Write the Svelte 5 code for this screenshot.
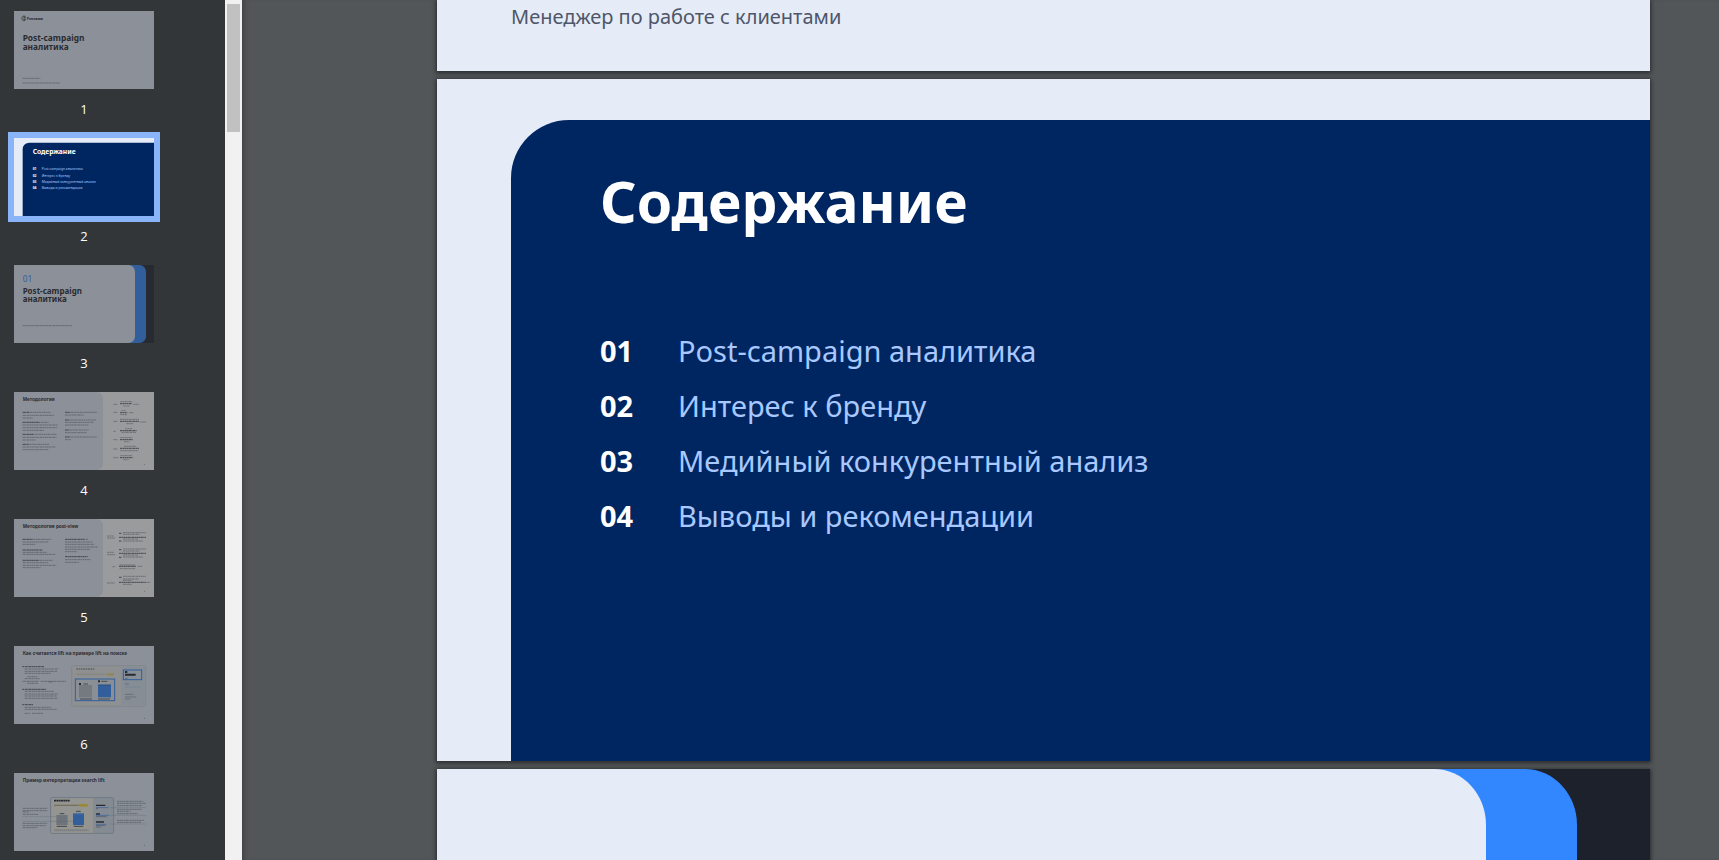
<script>
  const contents = [
    ['01', 'Post-campaign аналитика'],
    ['02', 'Интерес к бренду'],
    ['03', 'Медийный конкурентный анализ'],
    ['04', 'Выводы и рекомендации'],
  ];

  // Miniature slides live in a 420 x 234 space. Bars are [x, y, width, heavy?].
  const slides = [
    { n: 1, kind: 'cover', bars: [[26, 202, 53], [26, 216, 112]] },
    { n: 2, kind: 'contents', bars: [] },
    { n: 3, kind: 'section', bars: [[26, 182, 148]] },
    {
      n: 4, kind: 'method', title: 'Методология',
      bars: [
        [26, 61, 20, 1], [48, 61, 62], [26, 70, 94], [26, 78, 30],
        [26, 91, 52, 1], [80, 91, 24], [26, 99, 106], [26, 107, 104], [26, 115, 64],
        [26, 127, 34, 1], [62, 127, 66], [26, 136, 102], [26, 144, 40],
        [26, 157, 18, 1], [46, 157, 60], [26, 165, 98], [26, 173, 78],
        [153, 61, 16, 1], [171, 61, 79], [153, 69, 56],
        [153, 84, 14, 1], [169, 84, 77], [153, 91, 86], [153, 99, 70],
        [153, 114, 14, 1], [169, 114, 55], [153, 122, 66],
        [153, 135, 16, 1], [171, 135, 78], [153, 143, 18],
        [298, 37, 13], [319, 29, 36], [318, 35, 36, 1], [328, 42, 18], [358, 37, 17],
        [298, 61, 13], [322, 56, 14], [318, 62, 22, 1], [319, 68, 20], [346, 62, 13],
        [298, 88, 13], [318, 82, 57], [318, 88, 57, 1], [337, 95, 20], [379, 90, 17],
        [298, 118, 8], [334, 110, 20], [318, 116, 50, 1], [322, 121, 44],
        [298, 143, 13], [319, 137, 36], [318, 143, 38, 1], [330, 149, 16],
        [298, 171, 13], [330, 163, 36], [318, 169, 57, 1], [319, 176, 54],
        [298, 197, 15], [319, 191, 36], [318, 197, 38, 1], [328, 203, 16], [390, 217, 3],
      ],
    },
    {
      n: 5, kind: 'method', title: 'Методология post-view',
      bars: [
        [26, 61, 30, 1], [58, 61, 54], [26, 69, 78], [26, 76, 38],
        [26, 93, 60, 1], [26, 100, 72], [26, 106, 98],
        [26, 124, 50, 1], [78, 124, 38], [26, 131, 78], [26, 139, 101], [26, 146, 54],
        [153, 61, 60, 1], [215, 61, 8], [153, 69, 82], [153, 76, 88], [153, 84, 98], [153, 91, 76], [153, 98, 36],
        [153, 113, 68, 1], [153, 122, 78], [153, 130, 42],
        [279, 51, 21], [279, 57, 24], [315, 43, 7, 1], [327, 41, 69], [327, 46, 50], [315, 55, 81, 1], [327, 60, 45], [315, 66, 8, 1], [327, 66, 60],
        [279, 100, 21], [279, 107, 24], [315, 92, 7, 1], [327, 90, 69], [327, 96, 50], [315, 103, 81, 1], [327, 108, 45], [315, 115, 8, 1], [327, 114, 60],
        [295, 143, 9], [317, 138, 46], [315, 142, 52, 1], [317, 149, 46], [372, 142, 14],
        [279, 192, 23], [315, 175, 9, 1], [327, 172, 69], [327, 180, 48], [327, 184, 27], [315, 190, 81, 1], [398, 190, 11], [327, 196, 27], [390, 217, 3],
      ],
    },
    {
      n: 6, kind: 'lift', title: 'Как считается lift на примере lift на поиске',
      bars: [
        [25, 62, 5, 1], [32, 62, 58, 1], [32, 69, 101], [32, 76, 97], [32, 82, 79],
        [40, 92, 30], [32, 98, 45], [26, 106, 48], [80, 106, 76], [40, 112, 32], [104, 108, 12],
        [25, 130, 5, 1], [32, 130, 64, 1], [32, 136, 88], [32, 144, 100], [32, 150, 96], [32, 157, 98],
        [25, 176, 5, 1], [32, 176, 26, 1], [32, 184, 80], [32, 190, 96], [32, 202, 17], [54, 202, 34], [390, 217, 3],
      ],
    },
    {
      n: 7, kind: 'search', title: 'Пример интерпретации search lift',
      bars: [
        [26, 106, 74], [26, 113, 74], [26, 117, 18], [26, 124, 46],
        [26, 151, 74], [26, 158, 70], [26, 164, 44],
        [309, 85, 79], [309, 91, 87], [309, 98, 76],
        [309, 109, 74], [309, 115, 40], [309, 122, 62],
        [309, 142, 81], [309, 148, 72], [390, 217, 3],
      ],
    },
  ];
</script>

{#snippet slideArt(s)}
  <svg class="art" viewBox="0 0 420 234" aria-hidden="true">
    <rect width="420" height="234" fill={s.kind === 'section' ? '#1d212b' : s.kind === 'method' ? '#fff' : '#e5ecf8'} />
    {#if s.kind === 'cover'}
      <g fill="none" stroke="#1d212b" stroke-width="2">
        <path d="M34 16a7 7 0 1 0 0 12" /><path d="M30 15v14M30 19h6M30 25h6" />
      </g>
      <text x="38" y="27" font-size="11" font-weight="700">Реклама</text>
      <text x="26" y="91" font-size="25" font-weight="700">Post-campaign</text>
      <text x="26" y="116" font-size="25" font-weight="700">аналитика</text>
    {:else if s.kind === 'contents'}
      <path d="M26 234V34a20 20 0 0 1 20-20H420V234Z" fill="#002661" />
      <text class="white" x="56" y="49" font-size="20" font-weight="700">Содержание</text>
      {#each contents as [num, label], i}
        <text class="white" x="56" y={97 + i * 19} font-size="10" font-weight="700">{num}</text>
        <text class="sky" x="83" y={97 + i * 19} font-size="10">{label}</text>
      {/each}
    {:else if s.kind === 'section'}
      <path d="M0 0H376a20 20 0 0 1 20 20V214a20 20 0 0 1-20 20H0Z" fill="#3287ff" />
      <path d="M0 0H343a20 20 0 0 1 20 20V214a20 20 0 0 1-20 20H0Z" fill="#e5ecf8" />
      <text class="blue" x="26" y="51" font-size="25">01</text>
      <text x="26" y="86" font-size="24" font-weight="700">Post-campaign</text>
      <text x="26" y="111" font-size="24" font-weight="700">аналитика</text>
    {:else}
      {#if s.kind === 'method'}
        <path d="M0 0H247a20 20 0 0 1 20 20V214a20 20 0 0 1-20 20H0Z" fill="#e5ecf8" />
      {/if}
      <text x="26" y="27" font-size="14" font-weight="700">{s.title}</text>
    {/if}

    {#if s.kind === 'lift'}
      <rect x="173" y="59" width="222" height="122" rx="5" fill="#e9e9e8" stroke="#bdcbd9" stroke-width="2" />
      <rect x="322" y="61" width="71" height="118" fill="#dce4ef" />
      <path d="M187 69h54" stroke="#5a6272" stroke-width="4" stroke-dasharray="5 2" opacity=".65" />
      <path d="M187 85h90" stroke="#dcd8c0" stroke-width="4" /><path d="M279 85h21" stroke="#f0d98a" stroke-width="8" />
      <rect x="184" y="99" width="118" height="65" fill="#dfe7ef" stroke="#3287ff" stroke-width="3" />
      <path d="M195 117h39v37h-39z" fill="#b8bec9" /><path d="M252 117h39v37h-39z" fill="#3287ff" />
      <path d="M252 117h39" stroke="#1d66c9" stroke-width="3" />
      <path d="M195 114h6M252 106h6M334 78h6" stroke="#1d212b" stroke-width="6" />
      <path d="M208 114h14M262 106h18M198 159h36M252 159h36" stroke="#5a6272" stroke-width="3" />
      <rect x="328" y="72" width="55" height="29" fill="#dce8f8" stroke="#3287ff" stroke-width="3" />
      <path d="M333 78h7M333 86h32" stroke="#1d212b" stroke-width="6" />
      <path d="M333 97h8M333 114h12M333 145h25M333 153h34M333 159h16" stroke="#9da9b8" stroke-width="3" />
      <path d="M333 123h46" stroke="#a6caff" stroke-width="2" />
    {:else if s.kind === 'search'}
      <rect x="110" y="74" width="189" height="107" rx="4" fill="#d7e0ec" stroke="#aabbd0" stroke-width="3" />
      <path d="M112 76h125v103H112z" fill="#f5f3e9" />
      <path d="M120 83h47" stroke="#1d212b" stroke-width="5" stroke-dasharray="6 1" />
      <path d="M120 97h76" stroke="#b6ae83" stroke-width="4" /><path d="M198 97h20" stroke="#ffdb37" stroke-width="8" stroke-linecap="round" />
      <path d="M127 126h34v30h-34z" fill="#aab2bf" /><path d="M177 120h33v36h-33z" fill="#3287ff" /><path d="M177 122h33" stroke="#72aaff" stroke-width="4" />
      <path d="M137 122h14M186 115h14M128 160h31M179 160h29" stroke="#4b5261" stroke-width="3" />
      <path d="M120 172h104" stroke="#c2c6c9" stroke-width="6" stroke-dasharray="5 1" />
      <path d="M246 97h28M246 123h12M246 147h24" stroke="#1d212b" stroke-width="4" />
      <path d="M246 104h38M246 127h40M246 154h32" stroke="#3287ff" stroke-width="2" />
      <path d="M246 107h6M246 131h32M246 158h28M246 162h14" stroke="#68748b" stroke-width="2" />
      <path d="M24 131H127M24 145H177M289 104H397M289 127H397M289 153H397" stroke="#8793a7" stroke-width="1" fill="none" />
    {/if}

    {#each s.bars as [x, y, w, heavy]}
      <line x1={x} x2={x + w} y1={y} y2={y} stroke="#1d212b" stroke-width="3" stroke-dasharray="7 1 4 1" opacity={heavy ? 0.75 : 0.38} />
    {/each}
  </svg>
{/snippet}

<div class="viewer">
  <nav class="sidebar" aria-label="Страницы">
    {#each slides as s}
      <button class="thumb" class:active={s.n === 2} aria-label={`Страница ${s.n}`} aria-current={s.n === 2 ? 'page' : undefined}>
        <span class="frame">{@render slideArt(s)}</span>
        {#if s.n < slides.length}<span class="number">{s.n}</span>{/if}
      </button>
    {/each}
  </nav>
  <div class="track"><div class="handle"></div></div>

  <main class="document">
    <section class="page cover">
      <p>Менеджер по работе с клиентами</p>
    </section>
    <section class="page toc">
      <div class="panel">
        <h1>Содержание</h1>
        <ol>
          {#each contents as [num, label]}
            <li><b>{num}</b><span>{label}</span></li>
          {/each}
        </ol>
      </div>
    </section>
    <section class="page divider">
      <div class="blue-layer"><div class="light-layer"></div></div>
    </section>
  </main>
</div>

<style>
  :global(body) {
    margin: 0;
    background: #525659;
  }
  .viewer {
    display: flex;
    height: 100vh;
    overflow: hidden;
    font-family: "Noto Sans", "Open Sans", sans-serif;
  }
  .sidebar {
    box-sizing: border-box;
    display: flex;
    flex-direction: column;
    flex: none;
    width: 225px;
    padding: 11px 14px 0;
    overflow: hidden;
    background: #323639;
  }
  .thumb {
    display: flex;
    flex: none;
    flex-direction: column;
    width: 140px;
    min-height: 127px;
    padding: 0;
    border: 0;
    background: none;
    color: #fff;
    font: 13px/16px "Open Sans", "Noto Sans", sans-serif;
    cursor: pointer;
  }
  .thumb:last-child {
    min-height: 0;
  }
  .frame {
    display: block;
    width: 100%;
    opacity: 0.5;
  }
  .active .frame {
    opacity: 1;
    box-shadow: 0 0 0 6px #8ab4f8;
  }
  .art {
    display: block;
    width: 100%;
  }
  .art text {
    fill: #1d212b;
    font-family: "Noto Sans", sans-serif;
  }
  .art .white {
    fill: #fff;
  }
  .art .sky {
    fill: #a8c8ff;
  }
  .art .blue {
    fill: #3287ff;
  }
  .number {
    width: 100%;
    padding: 12px 0 21px;
    text-align: center;
  }
  .track {
    box-sizing: border-box;
    flex: none;
    width: 17px;
    padding: 4px 2px;
    background: #f1f1f1;
  }
  .handle {
    height: 15%;
    background: #c1c1c1;
  }
  .document {
    flex: 1;
    display: flex;
    flex-direction: column;
    gap: 8px;
    min-width: 0;
    padding: 0 69px 0 195px;
    overflow: hidden;
    box-shadow: inset 6px 0 6px -5px rgba(0, 0, 0, 0.3);
  }
  .page {
    flex: none;
    overflow: hidden;
    background: #e5ecf8;
    box-shadow: 0 1px 4px 1px rgba(0, 0, 0, 0.5);
  }
  .cover p {
    margin: 0;
    padding: 3px 74px 40px;
    color: #4f5668;
    font-size: 20px;
    line-height: 28px;
  }
  .toc {
    display: flex;
    box-sizing: border-box;
    aspect-ratio: 16 / 9;
    padding: 41px 0 0 74px;
  }
  .panel {
    flex: 1;
    padding: 41px 89px 0;
    border-top-left-radius: 58px;
    background: #002661;
    color: #fff;
  }
  h1 {
    margin: 0;
    font-size: 57px;
    line-height: 80px;
  }
  ol {
    margin: 82px 0 0;
    padding: 0;
    list-style: none;
    font-size: 29px;
    line-height: 55px;
  }
  li {
    display: grid;
    grid-template-columns: 78px 1fr;
  }
  li span {
    color: #a8c8ff;
  }
  .divider {
    display: flex;
    aspect-ratio: 16 / 9;
    background: #1d212b;
  }
  .blue-layer {
    display: flex;
    width: 94%;
    border-radius: 0 52px 52px 0 / 0 56px 56px 0;
    background: #3287ff;
  }
  .light-layer {
    width: 92%;
    border-radius: 0 52px 52px 0 / 0 56px 56px 0;
    background: #e5ecf8;
  }
</style>
